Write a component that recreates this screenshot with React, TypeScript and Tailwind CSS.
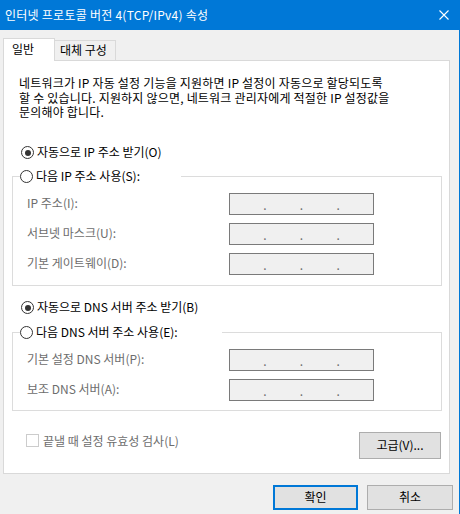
import React from "react";

const FONT = "font-['Noto_Sans_CJK_KR','Liberation_Sans',sans-serif]";

function Radio({ checked }: { checked?: boolean }) {
  return (
    <span className="w-[13px] h-[13px] rounded-full border border-[#333333] bg-white flex items-center justify-center shrink-0">
      {checked && <span className="w-[6px] h-[6px] rounded-full bg-[#333333]" />}
    </span>
  );
}

function IpBox() {
  return (
    <div className="w-[145px] h-[22px] border border-[#7a7a7a] bg-[#f0f0f0] flex items-center justify-evenly text-[#6d6d6d] text-[12px] leading-[12px] pt-[3px]">
      <span>.</span>
      <span>.</span>
      <span>.</span>
    </div>
  );
}

function Row({ label }: { label: string }) {
  return (
    <div className="flex items-center h-[22px]">
      <div className="w-[216px] pl-[14px] text-[#6d6d6d] whitespace-nowrap">{label}</div>
      <IpBox />
    </div>
  );
}

export default function App() {
  return (
    <div
      className={`w-[460px] h-[514px] bg-[#f0f0f0] flex flex-col border-r border-[#0078d7] text-[12px] leading-[14.5px] text-black ${FONT}`}
    >
      {/* Title bar */}
      <div className="h-[30px] bg-[#0078d7] flex items-center justify-between pl-[5px] pr-[10px] text-white shrink-0">
        <span className="whitespace-nowrap tracking-[0.25px]">인터넷 프로토콜 버전 4(TCP/IPv4) 속성</span>
        <svg width="10" height="10" viewBox="0 0 10 10" className="block">
          <path d="M0.5 0.5 L9.5 9.5 M9.5 0.5 L0.5 9.5" stroke="#ffffff" strokeWidth="1.1" />
        </svg>
      </div>

      {/* Tabs */}
      <div className="mt-[8px] ml-[3px] h-[22px] flex items-end">
        <div className="relative z-10 h-[23px] w-[52px] -mb-px bg-white border-l border-t border-r border-[#d9d9d9] pl-[8px] pt-[3px]">
          일반
        </div>
        <div className="h-[20px] w-[61px] border-t border-r border-[#d9d9d9] pl-[5px] pt-[2px]">
          대체 구성
        </div>
      </div>

      {/* Panel */}
      <div className="ml-[3px] w-[447px] h-[414px] shrink-0 border border-[#d9d9d9] bg-white flex flex-col">
        <div className="mt-[15px] ml-[15px] whitespace-nowrap tracking-[0.2px] flex flex-col">
          <div className="h-[14.5px]">네트워크가 IP 자동 설정 기능을 지원하면 IP 설정이 자동으로 할당되도록</div>
          <div className="h-[14.5px]">할 수 있습니다. 지원하지 않으면, 네트워크 관리자에게 적절한 IP 설정값을</div>
          <div className="h-[14.5px]">문의해야 합니다.</div>
        </div>

        <div className="mt-[23px] ml-[17px] h-[20px] flex items-center gap-[3px]">
          <Radio checked />
          <span>자동으로 IP 주소 받기(O)</span>
        </div>

        <fieldset className="mt-[4px] ml-[8px] w-[430px] border border-[#dcdcdc] pt-[6px] pb-[10px] flex flex-col gap-[8px]">
          <legend className="ml-[7px] w-[161px] h-[20px] flex items-center gap-[3px]">
            <Radio />
            <span>다음 IP 주소 사용(S):</span>
          </legend>
          <Row label="IP 주소(I):" />
          <Row label="서브넷 마스크(U):" />
          <Row label="기본 게이트웨이(D):" />
        </fieldset>

        <div className="mt-[12px] ml-[17px] h-[20px] flex items-center gap-[3px]">
          <Radio checked />
          <span>자동으로 DNS 서버 주소 받기(B)</span>
        </div>

        <fieldset className="mt-[5px] ml-[8px] w-[430px] border border-[#dcdcdc] pt-[6px] pb-[9px] flex flex-col gap-[8px]">
          <legend className="ml-[7px] w-[202px] h-[20px] flex items-center gap-[3px]">
            <Radio />
            <span>다음 DNS 서버 주소 사용(E):</span>
          </legend>
          <Row label="기본 설정 DNS 서버(P):" />
          <Row label="보조 DNS 서버(A):" />
        </fieldset>

        <div className="mt-[21px] ml-[22px] mr-[8px] flex items-start justify-between">
          <div className="mt-[2px] flex items-center gap-[4px] text-[#6d6d6d]">
            <span className="w-[13px] h-[13px] border border-[#cccccc] bg-white shrink-0" />
            <span>끝낼 때 설정 유효성 검사(L)</span>
          </div>
          <button className="w-[82px] h-[27px] border border-[#adadad] bg-[#e1e1e1] flex items-center justify-center">
            고급(V)...
          </button>
        </div>
      </div>

      {/* Bottom buttons */}
      <div className="mt-[11px] pr-[6px] flex justify-end gap-[9px]">
        <button className="w-[85px] h-[25px] border-2 border-[#0078d7] bg-[#e1e1e1] flex items-center justify-center">
          확인
        </button>
        <button className="w-[86px] h-[25px] border border-[#adadad] bg-[#e1e1e1] flex items-center justify-center">
          취소
        </button>
      </div>
    </div>
  );
}
